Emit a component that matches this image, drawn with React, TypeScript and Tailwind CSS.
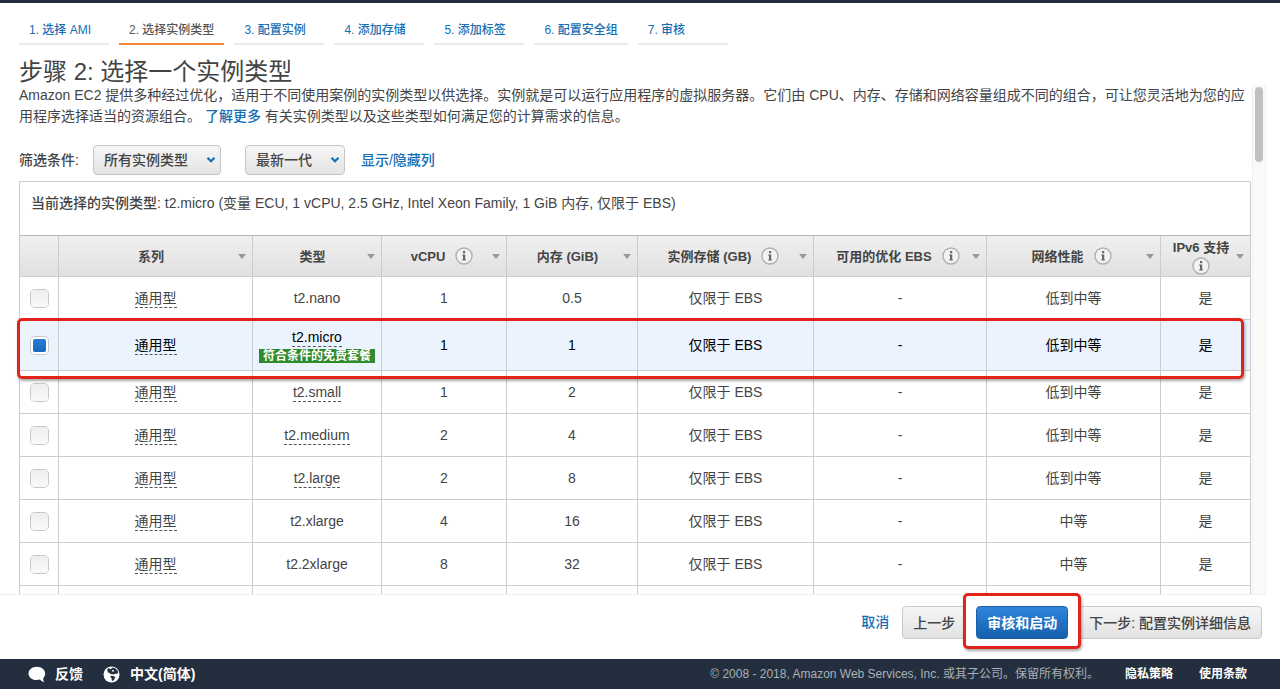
import { useState } from 'react';

interface Instance {
  type: string;
  dashed?: boolean;
  free?: boolean;
  vcpu: number;
  memory: string;
  network: string;
}

const steps = ['选择 AMI', '选择实例类型', '配置实例', '添加存储', '添加标签', '配置安全组', '审核'];

const columns = [
  { label: '系列', width: 'w-[194px]' },
  { label: '类型', width: 'w-[129px]' },
  { label: 'vCPU', width: 'w-[125px]', info: true },
  { label: '内存 (GiB)', width: 'w-[131px]' },
  { label: '实例存储 (GB)', width: 'w-[176px]', info: true },
  { label: '可用的优化 EBS', width: 'w-[173px]', info: true },
  { label: '网络性能', width: 'w-[174px]', info: true },
  { label: 'IPv6 支持', width: 'w-[90px]', info: true, stacked: true },
];

const instances: Instance[] = [
  { type: 't2.nano', vcpu: 1, memory: '0.5', network: '低到中等' },
  { type: 't2.micro', dashed: true, free: true, vcpu: 1, memory: '1', network: '低到中等' },
  { type: 't2.small', dashed: true, vcpu: 1, memory: '2', network: '低到中等' },
  { type: 't2.medium', dashed: true, vcpu: 2, memory: '4', network: '低到中等' },
  { type: 't2.large', dashed: true, vcpu: 2, memory: '8', network: '低到中等' },
  { type: 't2.xlarge', vcpu: 4, memory: '16', network: '中等' },
  { type: 't2.2xlarge', vcpu: 8, memory: '32', network: '中等' },
];

const cell = 'border-r border-b border-[#ccc]';
const greyButton =
  'h-[33px] rounded border border-[#c8c8c8] bg-linear-to-b from-[#f6f6f6] to-[#e2e2e2] px-[10px] text-sm font-medium text-[#444]';

function InfoIcon() {
  return (
    <svg className="size-[18px] shrink-0" viewBox="0 0 18 18" fill="none">
      <circle cx="9" cy="9" r="8" fill="#f2f2f2" stroke="#b0b0b0" strokeWidth="1.4" />
      <rect x="8" y="4" width="2.2" height="2.2" fill="#666" />
      <path d="M7.200 7.400h3v5.200h.8v1H7.200v-1H8V8.400h-.8z" fill="#666" />
    </svg>
  );
}

function SpeechIcon() {
  return (
    <svg className="h-[17px] w-[18px]" viewBox="0 0 18 17" fill="#fff">
      <path d="M8.800.8C4.200.8.5 3.700.5 7.400s3.700 6.700 8.300 6.700c1.200 0 2.300-.2 3.300-.5 1 1.500 2.400 2.400 4.300 2.700-.9-1.200-1.300-2.700-1.100-4.400 1.200-1.200 1.900-2.800 1.900-4.500C17.200 3.700 13.400.8 8.800.8z" />
    </svg>
  );
}

function GlobeIcon() {
  return (
    <svg className="size-[17px]" viewBox="0 0 17 17">
      <circle cx="8.500" cy="8.500" r="8" fill="#fff" />
      <path
        d="M4.200 2.900 6 2l1 1.200 1.600-.6 1-1.200 2.600.9 2.300 2.300.7 2-1.300 1.300-1.800-.5-1.300 1.300-1.400-.8-1.700.4-1.400-1.500-1.400-.2z"
        fill="#232f3e"
      />
      <path d="M7.800 9.700l2.700.3 1.900 1.300-.9 1.800-1.700 1.800-1-.4-.2-2.200-1.200-1.300z" fill="#232f3e" />
      <path d="M8.800 4.400l1.400-.6.9 1.300-1.300 1z" fill="#fff" />
    </svg>
  );
}

function FilterSelect({ label, value, width }: { label: string; value: string; width: string }) {
  return (
    <span className={`relative ${width}`}>
      <select
        aria-label={label}
        className="h-[30px] w-full appearance-none rounded border border-[#c4c4c4] bg-linear-to-b from-[#f6f6f6] to-[#e4e4e4] pl-[10px] text-sm font-medium text-[#444]"
      >
        <option>{value}</option>
      </select>
      <svg className="pointer-events-none absolute top-[11px] right-[5px] h-2 w-[10px]" viewBox="0 0 10 8" fill="none">
        <path d="M1.500 1.800 5 5.200l3.500-3.400" stroke="#146eb4" strokeWidth="2.200" />
      </svg>
    </span>
  );
}

export default function App() {
  const [selected, setSelected] = useState('t2.micro');

  return (
    <div className="flex h-screen flex-col overflow-hidden bg-white font-['Liberation_Sans','Noto_Sans_CJK_SC',sans-serif] text-sm text-[#444]">
      <div className="h-[3px] shrink-0 bg-[#232f3e]" />

      <nav className="flex shrink-0 gap-[10px] px-[19px] pt-[15px]">
        {steps.map((step, i) => (
          <a
            key={step}
            href="#"
            className={`h-[27px] min-w-[90px] border-b-2 px-[10px] text-xs leading-[24px] font-medium whitespace-nowrap ${
              i === 1 ? 'border-[#f58536] text-[#555]' : 'border-[#eaeaea] text-[#146eb4]'
            }`}
          >
            {i + 1}. {step}
          </a>
        ))}
      </nav>

      <h1 className="mt-[14px] shrink-0 px-[19px] text-2xl leading-[26px]">步骤 2: 选择一个实例类型</h1>

      <main className="mr-[14px] flex min-h-0 flex-1 overflow-hidden border-b border-[#eee]">
        <div className="min-w-0 flex-1 overflow-hidden pl-[19px]">
          <p className="leading-[21px]">
            Amazon EC2 提供多种经过优化，适用于不同使用案例的实例类型以供选择。实例就是可以运行应用程序的虚拟服务器。它们由 CPU、内存、存储和网络容量组成不同的组合，可让您灵活地为您的应用程序选择适当的资源组合。{' '}
            <a href="#" className="font-medium text-[#146eb4]">了解更多</a> 有关实例类型以及这些类型如何满足您的计算需求的信息。
          </p>

          <div className="mt-[18px] flex items-center font-medium">
            <span className="mr-[14px]">筛选条件:</span>
            <FilterSelect label="实例类型" value="所有实例类型" width="mr-6 w-[128px]" />
            <FilterSelect label="实例世代" value="最新一代" width="mr-4 w-[100px]" />
            <a href="#" className="text-[#146eb4]">显示/隐藏列</a>
          </div>

          <section className="mt-[6px] border-t border-l border-[#ccc]">
            <div className="h-[53px] border-r border-[#ccc] pt-[11px] pl-[11px] leading-[21px]">
              <span className="font-medium">当前选择的实例类型:</span> t2.micro (变量 ECU, 1 vCPU, 2.5 GHz, Intel Xeon Family, 1 GiB 内存, 仅限于 EBS)
            </div>

            <table className="w-full table-fixed border-separate border-spacing-0 border-t border-[#b8b8b8] text-center">
              <colgroup>
                <col className="w-[39px]" />
                {columns.map((col) => (
                  <col key={col.label} className={col.width} />
                ))}
              </colgroup>
              <thead className="bg-linear-to-b from-[#f0f0f0] to-[#e0e0e0] text-[13px]">
                <tr className="h-[41px]">
                  <td className={cell} />
                  {columns.map((col) => (
                    <th key={col.label} className={`${cell} p-0 font-bold`}>
                      <div className={`flex items-center pr-[6px] ${col.info && !col.stacked ? 'pl-[10px]' : 'pl-[5px]'}`}>
                        <div
                          className={`flex flex-1 items-center justify-center whitespace-nowrap ${
                            col.stacked ? 'flex-col' : 'gap-[10px]'
                          }`}
                        >
                          <span className="leading-[19px]">{col.label}</span>
                          {col.info && <InfoIcon />}
                        </div>
                        <svg className="h-[5px] w-2 shrink-0" viewBox="0 0 8 5" fill="#999">
                          <path d="M0 0h8L4 5z" />
                        </svg>
                      </div>
                    </th>
                  ))}
                </tr>
              </thead>
              <tbody>
                {instances.map((item) => {
                  const checked = item.type === selected;
                  return (
                    <tr
                      key={item.type}
                      className={`relative ${item.free ? 'h-[51px]' : 'h-[43px]'} ${checked ? 'bg-[#eaf3fe] text-black' : ''}`}
                    >
                      <td className={`${cell} p-0`}>
                        <input
                          type="checkbox"
                          aria-label={item.type}
                          checked={checked}
                          onChange={() => setSelected(item.type)}
                          className="mx-auto block size-[17px] appearance-none rounded-[4px] bg-linear-to-b from-[#eee] to-[#fafafa] ring-1 ring-[#c8c8c8] checked:border-2 checked:border-white checked:from-[#2a80d8] checked:to-[#1166bb] checked:bg-origin-border"
                        />
                        {item.free && (
                          <span className="pointer-events-none absolute -top-[2px] right-[7px] -bottom-[8px] -left-[3px] z-10 rounded-[5px] border-3 border-[#e2231a] shadow-[1px_2px_3px_rgba(0,0,0,0.35)]" />
                        )}
                      </td>
                      <td className={cell}>
                        <span className="inline-block border-b border-dashed border-[#555] leading-[17px]">通用型</span>
                      </td>
                      <td className={`${cell} p-0`}>
                        <span className={`inline-block leading-[17px] ${item.dashed ? 'border-b border-dashed border-[#555]' : ''}`}>
                          {item.type}
                        </span>
                        {item.free && (
                          <span className="mx-auto mt-[2px] block w-[116px] bg-[#2e8b2e] text-xs leading-[14px] font-bold whitespace-nowrap text-white">
                            符合条件的免费套餐
                          </span>
                        )}
                      </td>
                      <td className={cell}>{item.vcpu}</td>
                      <td className={cell}>{item.memory}</td>
                      <td className={cell}>仅限于 EBS</td>
                      <td className={cell}>-</td>
                      <td className={cell}>{item.network}</td>
                      <td className={cell}>是</td>
                    </tr>
                  );
                })}
                <tr className="h-[43px]">
                  <td className={cell} />
                  {columns.map((col) => (
                    <td key={col.label} className={cell} />
                  ))}
                </tr>
              </tbody>
            </table>
          </section>
        </div>

        <div className="ml-px w-[14px] shrink-0 border-x border-[#f0f0f0] bg-[#fafafa] pt-[2px]">
          <div className="mx-auto h-[75px] w-2 rounded-full bg-[#c1c1c1]" />
        </div>
      </main>

      <div className="flex h-16 shrink-0 items-start justify-end gap-[10px] pt-[11px] pr-[18px]">
        <a href="#" className="mr-[3px] leading-[33px] font-medium text-[#146eb4]">取消</a>
        <button className={greyButton}>上一步</button>
        <span className="relative">
          <span className="absolute -inset-x-[13px] -top-[13px] -bottom-[10px] rounded-[5px] border-3 border-[#e2231a] bg-white shadow-[1px_2px_3px_rgba(0,0,0,0.35)]" />
          <button className="relative block h-[33px] rounded border border-[#1a5fa8] bg-linear-to-b from-[#2f86dd] to-[#1560ad] px-[10px] text-sm font-bold text-white">
            审核和启动
          </button>
        </span>
        <button className={greyButton}>下一步: 配置实例详细信息</button>
      </div>

      <footer className="flex h-[30px] shrink-0 items-center bg-[#232f3e] px-7 font-bold text-white">
        <button className="flex items-center gap-[9px]">
          <SpeechIcon />
          反馈
        </button>
        <button className="ml-5 flex items-center gap-[10px]">
          <GlobeIcon />
          中文(简体)
        </button>
        <span className="ml-auto text-xs font-normal text-[#aab0b8]">
          © 2008 - 2018, Amazon Web Services, Inc. 或其子公司。保留所有权利。
        </span>
        <a href="#" className="ml-[26px] text-xs">隐私策略</a>
        <a href="#" className="mr-[5px] ml-[26px] text-xs">使用条款</a>
      </footer>
    </div>
  );
}
